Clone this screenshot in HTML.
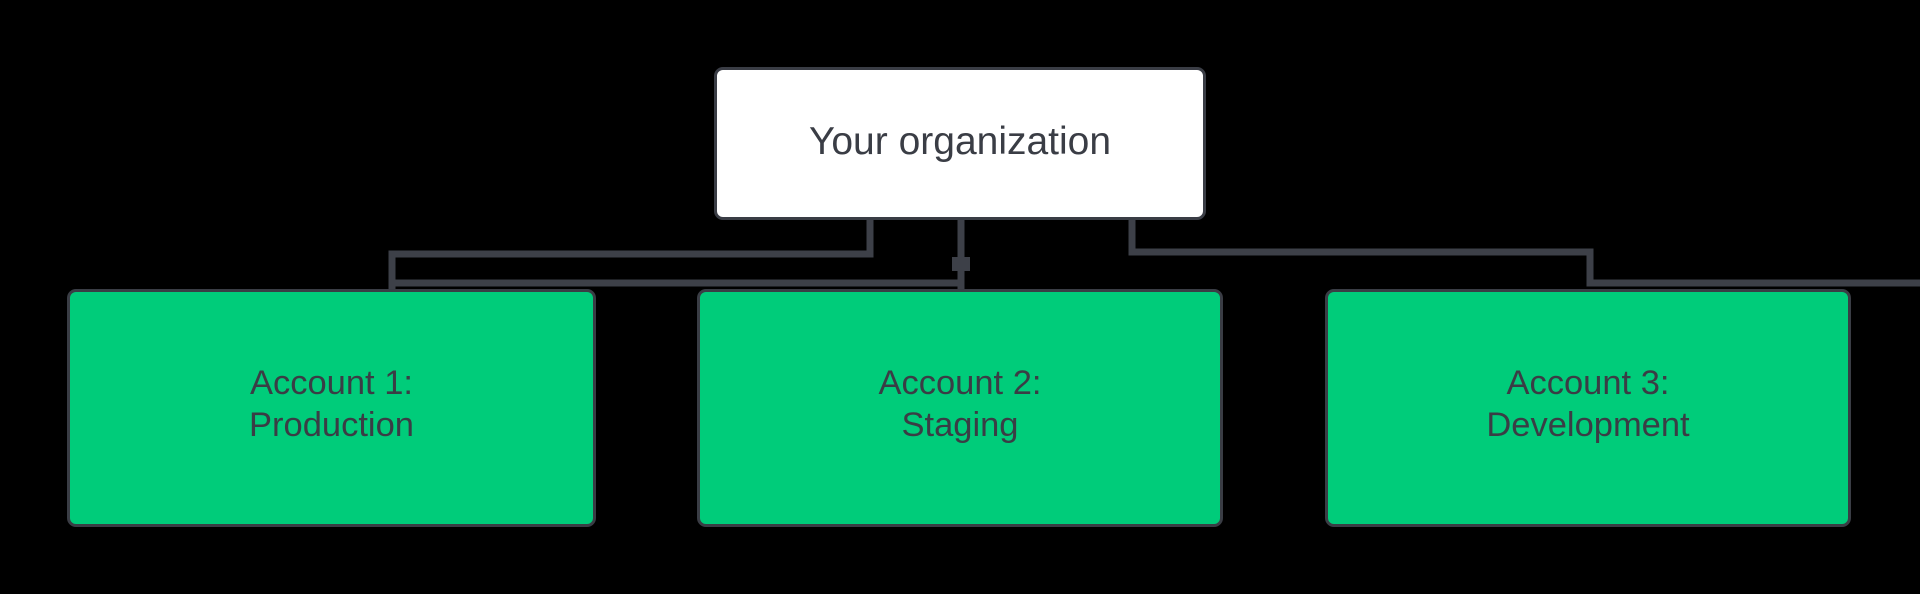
<!DOCTYPE html>
<html><head><style>
html,body{margin:0;padding:0;background:#000;}
body{width:1920px;height:594px;position:relative;overflow:hidden;font-family:"Liberation Sans",sans-serif;}
.b{position:absolute;box-sizing:border-box;border:3px solid #3a3d45;border-radius:9px;display:flex;align-items:center;justify-content:center;text-align:center;color:#3a3d45;}
.w{background:#fff;left:714px;top:67px;width:492px;height:153px;font-size:39px;padding-bottom:4px;}
.g{background:#00cc7a;top:289px;height:238px;font-size:34.5px;line-height:42px;padding-bottom:8px;}
</style></head><body>
<svg width="1920" height="594" style="position:absolute;left:0;top:0">
<g fill="none" stroke="#3d4048" stroke-width="7">
<path d="M870 218 V254 H392 V292"/>
<path d="M961 218 V292"/>
<path d="M392 283 H961"/>
<path d="M1132 218 V252 H1590 V283 H1920"/>
</g>
<rect x="952" y="257" width="18" height="14" fill="#3d4048"/>
</svg>
<div class="b w">Your organization</div>
<div class="b g" style="left:67px;width:529px">Account 1:<br>Production</div>
<div class="b g" style="left:697px;width:526px">Account 2:<br>Staging</div>
<div class="b g" style="left:1325px;width:526px">Account 3:<br>Development</div>
</body></html>
